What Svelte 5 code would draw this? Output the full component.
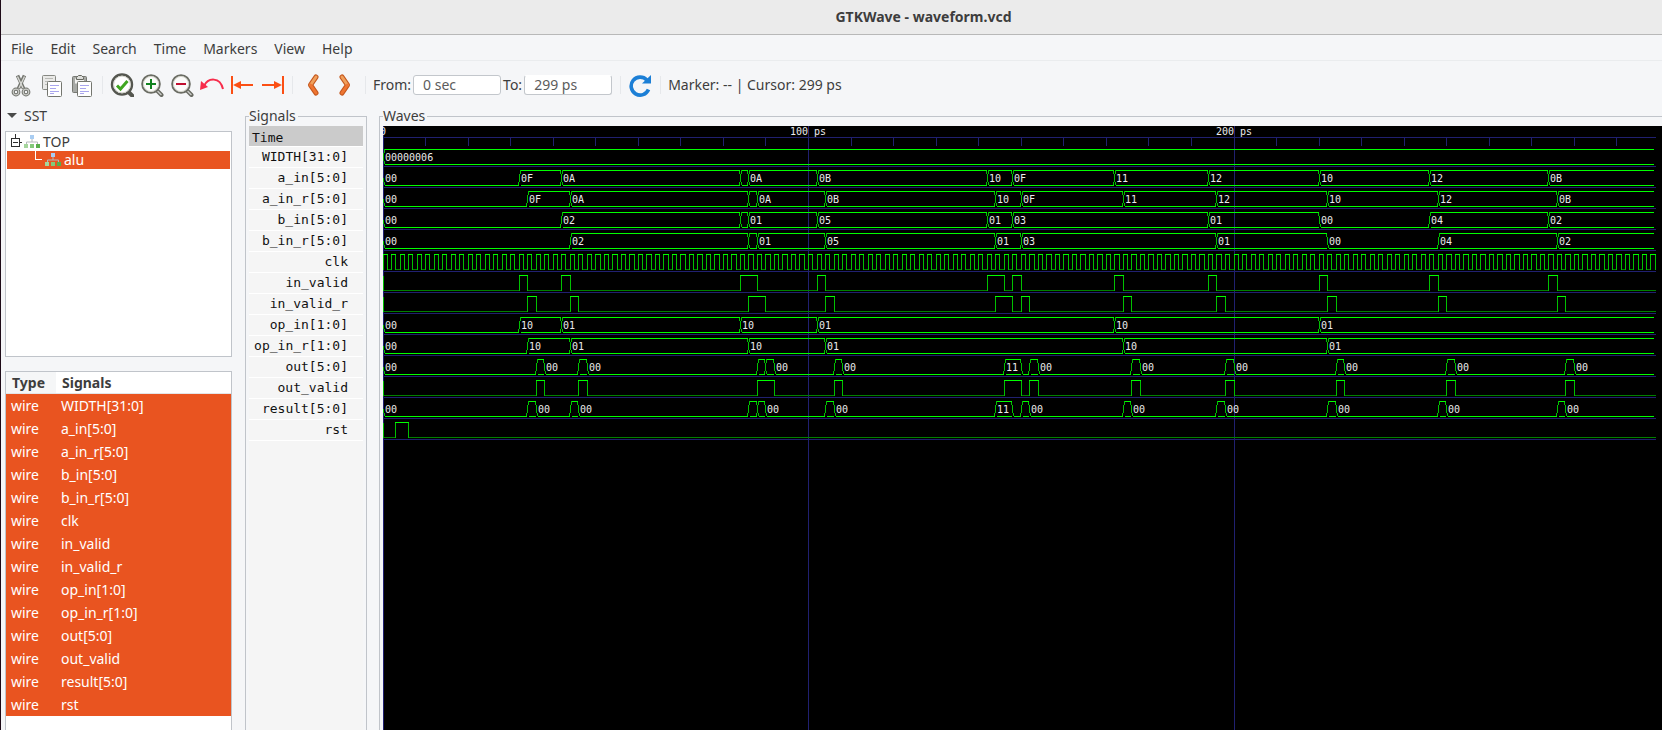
<script>
  // constants
  const SCALE = 4.255; // pixels per picosecond
  const END = 299;
  const ROW = 21;

  const menus = ["File", "Edit", "Search", "Time", "Markers", "View", "Help"];

  // bus values, [time, value]
  const aIn = [
    [0, "00"], [32, "0F"], [42, "0A"], [84, "00 "], [86, "0A"], [102, "0B"], [142, "10"],
    [148, "0F"], [172, "11"], [194, "12"], [220, "10"], [246, "12"], [274, "0B"],
  ];
  const bIn = [
    [0, "00"], [42, "02"], [84, "03"], [86, "01"], [102, "05"], [142, "01"],
    [148, "03"], [194, "01"], [220, "00"], [246, "04"], [274, "02"],
  ];
  const opIn = [
    [0, "00"], [32, "10"], [42, "01"], [84, "10"], [102, "01"], [172, "10"], [220, "01"],
  ];
  const result = [
    [0, "00"], [34, "0F"], [36, "00"], [44, "0C"], [46, "00"], [86, "0D"], [88, "0B"],
    [90, "00"], [104, "10"], [106, "00"], [144, "11"], [148, "00"], [150, "12"],
    [152, "00"], [174, "0E"], [176, "00"], [196, "11"], [198, "00"], [222, "10"],
    [224, "00"], [248, "16"], [250, "00"], [276, "0D"], [278, "00"],
  ];

  // high pulses, [rise, fall]
  const valid = [
    [32, 34], [42, 44], [84, 88], [102, 104], [142, 146], [148, 150],
    [172, 174], [194, 196], [220, 222], [246, 248], [274, 276],
  ];
  const clock = Array.from({ length: 150 }, (_, i) => [i * 2, i * 2 + 1]);

  const delayBus = (bus, d) => bus.map(([t, v]) => [t ? t + d : 0, v]);
  const delayBit = (bit, d) => bit.map(([a, b]) => [a + d, b + d]);

  const signals = [
    { name: "WIDTH[31:0]", bus: [[0, "00000006"]] },
    { name: "a_in[5:0]", bus: aIn },
    { name: "a_in_r[5:0]", bus: delayBus(aIn, 2) },
    { name: "b_in[5:0]", bus: bIn },
    { name: "b_in_r[5:0]", bus: delayBus(bIn, 2) },
    { name: "clk", bit: clock },
    { name: "in_valid", bit: valid },
    { name: "in_valid_r", bit: delayBit(valid, 2) },
    { name: "op_in[1:0]", bus: opIn },
    { name: "op_in_r[1:0]", bus: delayBus(opIn, 2) },
    { name: "out[5:0]", bus: delayBus(result, 2) },
    { name: "out_valid", bit: delayBit(valid, 4) },
    { name: "result[5:0]", bus: result },
    { name: "rst", bit: [[3, 6]] },
  ];

  const ticks = Array.from({ length: 30 }, (_, i) => i * 10);

  const px = (t) => Math.floor(t * SCALE) + 0.5;

  // a bus is two rails, or only the lower one while it is all zeros
  function traceBus(bus, top, bottom) {
    let rails = "";
    let edges = `M0.5 ${top + 8}L1.5 ${bottom}`;
    const labels = [];
    bus.forEach(([t, value], i) => {
      const last = i === bus.length - 1;
      const x1 = px(t);
      const x2 = last ? px(END) - 1 : px(bus[i + 1][0]);
      const a = x1 + 1;
      const b = x2 - 1;
      const zero = value === "00";
      rails += `M${a} ${bottom}H${b}`;
      if (!zero) rails += `M${a} ${top}H${b}`;
      if (i === 0) {
        if (!zero) edges += `M0.5 ${top + 8}L1.5 ${top}`;
      } else {
        const wasZero = bus[i - 1][1] === "00";
        if (!zero) edges += `M${x1 - 1} ${bottom}L${x1 + 1} ${top}`;
        if (!wasZero) edges += `M${x1 - 1} ${top}L${x1 + 1} ${bottom}`;
      }
      if (x2 - x1 > 14 && !(zero && x2 - x1 < 20)) {
        labels.push({ x: Math.floor(x1) + 2, y: Math.floor(bottom) - 3, value });
      }
    });
    return { rails, edges, labels, low: "" };
  }

  function traceBit(bit, top, bottom) {
    let rails = "";
    let edges = `M0.5 ${top}V${bottom}`;
    let low = "";
    let prev = 0.5;
    bit.forEach(([rise, fall]) => {
      const r = px(rise);
      const f = px(fall);
      if (r > prev) low += `M${prev} ${bottom}H${r}`;
      rails += `M${r - 0.5} ${top}H${f + 0.5}`;
      edges += `M${r} ${top}V${bottom + 0.5}M${f} ${top}V${bottom + 0.5}`;
      prev = f;
    });
    if (prev < px(END)) low += `M${prev} ${bottom}H${px(END) + 0.5}`;
    return { rails, edges, labels: [], low };
  }

  const traces = signals.map((s, i) => {
    const top = 23.5 + i * ROW;
    const bottom = top + 15;
    return s.bus ? traceBus(s.bus, top, bottom) : traceBit(s.bit, top, bottom);
  });

  let from = $state("0 sec");
  let to = $state("299 ps");
</script>

{#snippet hierarchy()}
  <svg class="tree-icon" width="16" height="14" viewBox="0 0 16 14">
    <path d="M8 4v3M2.5 9V7h11v2" fill="none" stroke="#b4b8ba" />
    <rect x="6" y="0" width="4" height="4" fill="#a9cdf2" />
    <rect x="0" y="9" width="4" height="4" fill="#a5d69c" />
    <rect x="6" y="9" width="4" height="4" fill="#84c97a" />
    <rect x="12" y="9" width="4" height="4" fill="#58ad4b" />
  </svg>
{/snippet}

{#snippet lens()}
  <path d="M16.5 17l5 5" stroke="#666860" stroke-width="4" stroke-linecap="round" />
  <path d="M17.5 18l3.5 3.5" stroke="#c9cac6" stroke-width="1.5" stroke-linecap="round" />
  <circle cx="11" cy="11" r="8.8" fill="#fbfbf9" stroke="#6b6d64" stroke-width="2" />
  <circle cx="11" cy="11" r="7.6" fill="none" stroke="#d3d4cc" />
{/snippet}

<div class="window">
  <header class="titlebar">GTKWave - waveform.vcd</header>

  <nav class="menubar">
    {#each menus as menu}
      <button>{menu}</button>
    {/each}
  </nav>

  <div class="toolbar">
    <div class="group">
      <button aria-label="Cut">
        <svg width="24" height="24" viewBox="0 0 24 24" fill="none">
          <path d="M7.500 2.500l6 13M14.500 2.500l-6 13" stroke="#73756f" stroke-width="3.600" />
          <path d="M7.500 3.500L13 15M14.500 3.500L9 15" stroke="#d8d9d5" stroke-width="1.400" />
          <circle cx="6" cy="19" r="2.800" stroke="#6f716b" stroke-width="3.200" />
          <circle cx="16" cy="19" r="2.800" stroke="#6f716b" stroke-width="3.200" />
          <circle cx="6" cy="19" r="2.800" stroke="#c9cac6" stroke-width="1.200" />
          <circle cx="16" cy="19" r="2.800" stroke="#c9cac6" stroke-width="1.200" />
        </svg>
      </button>
      <button aria-label="Copy">
        <svg width="24" height="24" viewBox="0 0 24 24" fill="none">
          <rect x="2.5" y="2.5" width="13" height="14" rx="1" fill="#e9e9e7" stroke="#868883" />
          <path d="M5 5.5h8M5 8.5h3M5 11.5h2" stroke="#b9bab6" />
          <rect x="7.5" y="8.5" width="14" height="15" rx="1" fill="#fff" stroke="#74766f" />
          <path d="M10 12.5h9M10 15.5h6M10 18.5h9M10 20.5h4" stroke="#a9a6ee" />
        </svg>
      </button>
      <button aria-label="Paste">
        <svg width="24" height="24" viewBox="0 0 24 24" fill="none">
          <rect x="2.5" y="3.5" width="14" height="16" rx="1" fill="#a8aaa6" stroke="#777973" />
          <path d="M5 5.5h9v5H5z" fill="#f2f2f0" />
          <path d="M6.5 6.5v-2l2-2h3l2 2v2z" fill="#dcddda" stroke="#666860" />
          <rect x="7.5" y="8.5" width="14" height="15" rx="1" fill="#fff" stroke="#74766f" />
          <path d="M10 12.5h9M10 15.5h6M10 18.5h9M10 20.5h4" stroke="#a9a6ee" />
        </svg>
      </button>
    </div>
    <span class="sep"></span>
    <div class="group">
      <button aria-label="Zoom fit">
        <svg width="24" height="24" viewBox="0 0 24 24" fill="none">
          <path d="M18.5 19l4 4" stroke="#54564f" stroke-width="4" stroke-linecap="round" />
          <circle cx="12" cy="11.5" r="10" fill="#f7f7f4" stroke="#54564f" stroke-width="2.4" />
          <circle cx="12" cy="11.5" r="8.4" fill="#fff" stroke="#cfd0c8" />
          <path d="M7 12.5l3.5 3.5 7-8" stroke="#3fa620" stroke-width="3" />
        </svg>
      </button>
      <button aria-label="Zoom in">
        <svg width="24" height="24" viewBox="0 0 24 24" fill="none">
          {@render lens()}
          <path d="M11 6v10M6 11h10" stroke="#11831f" stroke-width="2" />
        </svg>
      </button>
      <button aria-label="Zoom out">
        <svg width="24" height="24" viewBox="0 0 24 24" fill="none">
          {@render lens()}
          <path d="M6 11h10" stroke="#c00f2f" stroke-width="2" />
        </svg>
      </button>
      <button aria-label="Zoom undo">
        <svg width="24" height="24" viewBox="0 0 24 24" fill="none">
          <path d="M4 13C8 4.500 20 3.500 23 16" stroke="#f72c4b" stroke-width="2" />
          <path d="M0 17l1-9 7 6z" fill="#f72c4b" />
        </svg>
      </button>
      <button aria-label="Zoom to start">
        <svg width="24" height="24" viewBox="0 0 24 24" fill="none">
          <path d="M2 3v18M8 12h15" stroke="#fb4f14" stroke-width="2" />
          <path d="M3 12l8-4v8z" fill="#fb4f14" />
        </svg>
      </button>
      <button aria-label="Zoom to end">
        <svg width="24" height="24" viewBox="0 0 24 24" fill="none">
          <path d="M23 3v18M2 12h14" stroke="#fb4f14" stroke-width="2" />
          <path d="M22 12l-8-4v8z" fill="#fb4f14" />
        </svg>
      </button>
    </div>
    <span class="sep"></span>
    <div class="group">
      <button aria-label="Find previous edge">
        <svg width="24" height="24" viewBox="0 0 24 24" fill="none">
          <path d="M16 4l-5.500 8 5.500 8" stroke="#c4571d" stroke-width="5" stroke-linecap="round" stroke-linejoin="round" />
          <path d="M16 4l-5.500 8" stroke="#f0a05c" stroke-width="3" stroke-linecap="round" />
          <path d="M10.500 12l5.500 8" stroke="#ee7532" stroke-width="3" stroke-linecap="round" />
        </svg>
      </button>
      <button aria-label="Find next edge" class="next">
        <svg width="24" height="24" viewBox="0 0 24 24" fill="none">
          <path d="M9 4l5.500 8L9 20" stroke="#c4571d" stroke-width="5" stroke-linecap="round" stroke-linejoin="round" />
          <path d="M9 4l5.500 8" stroke="#f0a05c" stroke-width="3" stroke-linecap="round" />
          <path d="M14.500 12L9 20" stroke="#ee7532" stroke-width="3" stroke-linecap="round" />
        </svg>
      </button>
    </div>
    <span class="sep"></span>
    <div class="range">
      <label for="from">From:</label>
      <input id="from" type="text" bind:value={from} />
      <label for="to">To:</label>
      <input id="to" class="open-top" type="text" bind:value={to} />
    </div>
    <span class="sep"></span>
    <div class="group">
      <button aria-label="Reload">
        <svg width="24" height="24" viewBox="0 0 24 24" fill="none">
          <path d="M18.800 7A9 9 0 1 0 20.500 16.500" stroke="#1c7fd6" stroke-width="3.600" />
          <path d="M23 2v8.500h-9z" fill="#1c7fd6" />
        </svg>
      </button>
    </div>
    <span class="sep"></span>
    <output class="status">Marker: -- | Cursor: 299 ps</output>
  </div>

  <main>
    <aside>
      <button class="sst" aria-expanded="true">
        <svg width="10" height="6" viewBox="0 0 10 6"><path d="M0 0h10L5 5z" fill="#4a4a4a" /></svg>
        SST
      </button>
      <ul class="tree">
        <li>
          <svg width="14" height="18" viewBox="0 0 14 18" fill="none" stroke="#2e2e2e" shape-rendering="crispEdges">
            <path d="M5.500 1v4M1.500 5.500h8v8h-8zM3 9.500h5M10 9.500h2" />
          </svg>
          {@render hierarchy()}
          TOP
        </li>
        <li class="selected child">
          <svg width="10" height="18" viewBox="0 0 10 18" fill="none" stroke="#fff" shape-rendering="crispEdges">
            <path d="M.5 0v8.500h6.500" />
          </svg>
          {@render hierarchy()}
          alu
        </li>
      </ul>
      <div class="list">
        <table>
          <thead>
            <tr><th class="type">Type</th><th>Signals</th></tr>
          </thead>
          <tbody>
            {#each signals as signal}
              <tr><td>wire</td><td>{signal.name}</td></tr>
            {/each}
          </tbody>
        </table>
      </div>
    </aside>

    <fieldset class="names">
      <legend>Signals</legend>
      <ul>
        <li class="time">Time</li>
        {#each signals as signal}
          <li>{signal.name}</li>
        {/each}
      </ul>
    </fieldset>

    <fieldset class="waves">
      <legend>Waves</legend>
      <svg class="canvas" shape-rendering="crispEdges" fill="none">
        <!-- ruler and grid -->
        <g stroke="#202070">
          <path d={`M0 11.5H${px(END) + 0.5}`} />
          {#each ticks as t}
            <line x1={px(t)} x2={px(t)} y1={t % 100 ? 11 : 0} y2={t % 100 ? 20 : "100%"} />
          {/each}
          {#each signals as _, i}
            <path d={`M0 ${40.5 + i * ROW}H${px(END) + 0.5}`} />
          {/each}
        </g>
        <!-- the ruler labels are centred on their time, so the first is half out of view -->
        {#each [0, 100, 200] as t}
          <text x={Math.floor(px(t))} y="9" text-anchor="middle">{t ? `${t} ps` : t}</text>
        {/each}

        {#each traces as trace}
          <path d={trace.low} stroke="#008000" />
          <path d={trace.edges} stroke="#00c000" />
          <path d={trace.rails} stroke="#00ff00" />
          {#each trace.labels as label}
            <text x={label.x} y={label.y}>{label.value}</text>
          {/each}
        {/each}
      </svg>
    </fieldset>
  </main>
</div>

<style>
  :global(body) {
    margin: 0;
    background: #f5f6f8;
  }

  .window {
    box-sizing: border-box;
    display: flex;
    flex-direction: column;
    height: 100vh;
    overflow: hidden;
    border-left: 1px solid #1d0a17;
    background: #f5f6f8;
    color: #3d3d3d;
    font: 14px/20px "Noto Sans", "Open Sans", sans-serif;
  }

  button {
    display: flex;
    align-items: center;
    margin: 0;
    padding: 0;
    border: 0;
    background: none;
    color: inherit;
    font: inherit;
  }

  ul {
    margin: 0;
    padding: 0;
    list-style: none;
  }

  .titlebar {
    height: 34px;
    border-bottom: 1px solid #b8b8b8;
    background: #ebebeb;
    font-weight: bold;
    line-height: 34px;
    text-align: center;
    padding-left: 184px;
  }

  .menubar {
    display: flex;
    gap: 17px;
    height: 23px;
    padding: 2px 0 0 10px;
    border-bottom: 1px solid #eaecee;
  }

  /* toolbar */
  .toolbar {
    display: flex;
    align-items: center;
    height: 48px;
    padding-left: 9px;
    box-sizing: border-box;
    white-space: nowrap;
  }

  .group {
    display: flex;
    gap: 6px;
  }

  .next {
    margin-left: 3px;
  }

  .sep {
    width: 1px;
    height: 18px;
    margin: 0 7px 0 8px;
    background: #e6e8eb;
  }

  .range {
    display: flex;
    align-items: center;
    gap: 2px;
  }

  .range input {
    box-sizing: border-box;
    width: 88px;
    height: 20px;
    padding: 0 9px;
    border: 1px solid #c3c7cc;
    border-radius: 3px;
    background: #fff;
    color: #5c5c5c;
    font: inherit;
  }

  .range .open-top {
    border-top-color: #fff;
  }

  /* panes */
  main {
    display: flex;
    flex: 1;
    min-height: 0;
    padding-left: 4px;
  }

  aside {
    box-sizing: border-box;
    display: flex;
    flex-direction: column;
    flex: none;
    width: 227px;
    margin: -3px 13px 0 0;
  }

  .sst {
    gap: 7px;
    height: 20px;
    margin-bottom: 5px;
    padding-left: 2px;
  }

  .tree {
    box-sizing: border-box;
    height: 226px;
    margin-bottom: 14px;
    padding: 1px;
    border: 1px solid #c0c4ca;
    background: #fff;
  }

  .tree li {
    display: flex;
    align-items: center;
    height: 18px;
    padding-left: 3px;
    line-height: 18px;
  }

  .tree-icon {
    margin-right: 3px;
  }

  .tree .child {
    padding-left: 28px;
  }

  .tree .selected {
    background: #e95420;
    color: #fff;
  }

  .list {
    flex: 1;
    min-height: 0;
    border: 1px solid #c0c4ca;
    border-bottom: 0;
    background: #fff;
  }

  table {
    width: 100%;
    border-collapse: separate;
    border-spacing: 0;
  }

  th,
  td {
    height: 23px;
    padding: 0 5px;
    line-height: 23px;
    text-align: left;
  }

  th {
    box-sizing: border-box;
    height: 22px;
    padding: 0 6px;
    border-bottom: 1px solid #e3e5e8;
    line-height: 21px;
  }

  .type {
    width: 50px;
    background: #f5f6f7;
  }

  tbody {
    background: #e95420;
    color: #fff;
  }

  fieldset {
    display: flex;
    flex-direction: column;
    min-width: 0;
    margin: -3px 0 0;
    padding: 0 3px;
    border: 1px solid #c0c4ca;
    border-bottom: 0;
  }

  legend {
    height: 20px;
    padding: 0 2px 0 0;
  }

  .names {
    box-sizing: border-box;
    flex: none;
    width: 122px;
    margin-right: 12px;
  }

  .names ul {
    flex: 1;
    background: #f5f5f5;
    color: #111;
    font: 13px/20px "DejaVu Sans Mono", monospace;
  }

  .names li {
    height: 20px;
    padding-right: 15px;
    border-bottom: 1px solid #fff;
    text-align: right;
    white-space: nowrap;
  }

  .names .time {
    padding-left: 3px;
    background: #cbcbcb;
    line-height: 24px;
    text-align: left;
  }

  .waves {
    flex: 1;
    padding-right: 0;
    border-right: 0;
  }

  .canvas {
    display: block;
    flex: 1;
    width: 100%;
    min-height: 0;
    background: #000;
  }

  .canvas text {
    fill: #ececec;
    font: 10px "DejaVu Sans Mono", monospace;
    white-space: pre;
  }
</style>
